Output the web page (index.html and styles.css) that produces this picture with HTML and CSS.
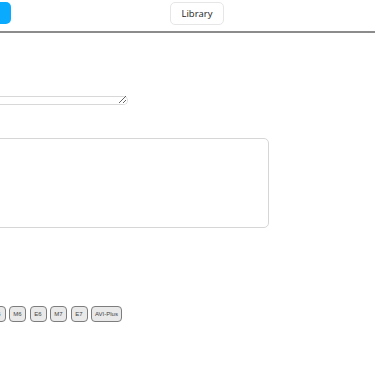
FILE: index.html
```html
<!DOCTYPE html>
<html>
<head>
<meta charset="utf-8">
<link rel="stylesheet" href="styles.css">
</head>
<body>
<div class="page">
  <header class="topbar">
    <button class="primary"></button>
    <button class="library">Library</button>
  </header>
  <main class="content">
    <textarea class="line-input"></textarea>
    <div class="panel"></div>
    <div class="chips">
      <span class="chip">E5</span>
      <span class="chip">M6</span>
      <span class="chip">E6</span>
      <span class="chip">M7</span>
      <span class="chip">E7</span>
      <span class="chip">AVI-Plus</span>
    </div>
  </main>
</div>
</body>
</html>
```
FILE: styles.css
```css
html, body {
  margin: 0;
  padding: 0;
  background: #fff;
  overflow: hidden;
}
body {
  font-family: "Open Sans", "Liberation Sans", sans-serif;
  width: 375px;
  height: 366px;
}
.page {
  margin-left: -40px;
  width: 415px;
}
.topbar {
  display: flex;
  align-items: flex-start;
  height: 33px;
  padding-top: 2px;
  box-sizing: border-box;
  border-bottom: 2px solid #8c8c8c;
}
.primary {
  width: 51px;
  height: 22px;
  background: #0aabff;
  border: none;
  border-radius: 5px;
  padding: 0;
}
.library {
  margin-left: 159px;
  width: 54px;
  height: 23px;
  background: #fff;
  border: 1px solid #e6e6e6;
  border-radius: 5px;
  font-family: "Open Sans", sans-serif;
  font-weight: 400;
  font-size: 9.5px;
  color: #1a1a1a;
  padding: 0;
}
.content {
  display: flex;
  flex-direction: column;
  align-items: flex-start;
  padding-top: 63px;
}
.line-input {
  width: 168px;
  height: 9px;
  box-sizing: border-box;
  border: 1px solid #d8d8d8;
  border-radius: 5px;
  padding: 0;
  margin: 0;
  resize: horizontal;
  display: block;
}
.panel {
  margin-top: 33px;
  width: 309px;
  height: 90px;
  box-sizing: border-box;
  border: 1px solid #d6d6d6;
  border-radius: 5px;
}
.chips {
  margin-top: 78px;
  display: flex;
  gap: 3.5px;
  margin-left: 28.5px;
}
.chip {
  display: inline-flex;
  align-items: center;
  justify-content: center;
  height: 16px;
  min-width: 17px;
  padding: 0 3px;
  box-sizing: border-box;
  background: #e9e9e9;
  border: 1px solid #7d7d7d;
  border-radius: 4px;
  font-family: "Liberation Sans", sans-serif;
  font-size: 6px;
  color: #444;
}
```
